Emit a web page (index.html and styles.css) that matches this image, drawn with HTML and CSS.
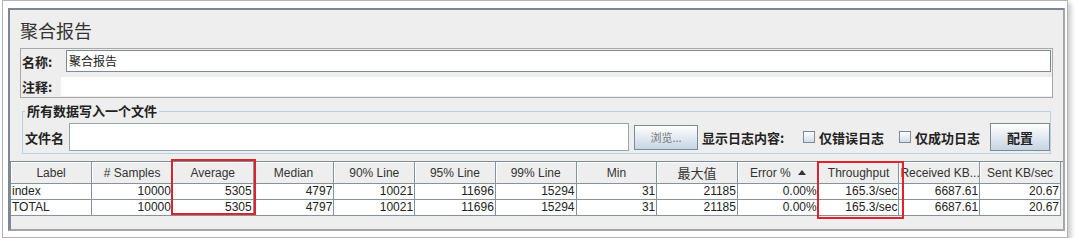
FILE: index.html
```html
<!DOCTYPE html>
<html lang="zh-CN">
<head>
    <meta charset="UTF-8">
    <title>聚合报告</title>
    <link rel="stylesheet" href="styles.css">
</head>
<body>
<div class="frame">
    <div class="panel">
        <div class="title">聚合报告</div>

        <!-- name / comment -->
        <div class="name-box">
            <div class="name-row">
                <span class="label name-label">名称:</span>
                <div class="field name-field">聚合报告</div>
            </div>
            <div class="comment-row">
                <span class="label comment-label">注释:</span>
                <div class="area"></div>
            </div>
        </div>

        <!-- write results to file -->
        <fieldset class="file-set">
            <legend>所有数据写入一个文件</legend>
            <div class="file-row">
                <span class="label file-label">文件名</span>
                <div class="field file-field"></div>
                <button class="btn browse">浏览...</button>
                <span class="label log-label">显示日志内容:</span>
                <label class="check check-first"><span class="box"></span>仅错误日志</label>
                <label class="check check-second"><span class="box"></span>仅成功日志</label>
                <button class="btn config">配置</button>
            </div>
        </fieldset>

        <!-- results table -->
        <div class="table-pane">
            <table>
                <tr>
                    <th>Label</th>
                    <th># Samples</th>
                    <th>Average</th>
                    <th>Median</th>
                    <th>90% Line</th>
                    <th>95% Line</th>
                    <th>99% Line</th>
                    <th>Min</th>
                    <th class="cjk">最大值</th>
                    <th>Error %<svg class="sort" width="8" height="5" viewBox="0 0 8 5"><path d="M0 5 L4 0 L8 5 Z" fill="#333"/></svg></th>
                    <th>Throughput</th>
                    <th>Received KB...</th>
                    <th>Sent KB/sec</th>
                </tr>
                <tr>
                    <td class="text">index</td>
                    <td>10000</td>
                    <td>5305</td>
                    <td>4797</td>
                    <td>10021</td>
                    <td>11696</td>
                    <td>15294</td>
                    <td>31</td>
                    <td>21185</td>
                    <td>0.00%</td>
                    <td>165.3/sec</td>
                    <td>6687.61</td>
                    <td>20.67</td>
                </tr>
                <tr>
                    <td class="text">TOTAL</td>
                    <td>10000</td>
                    <td>5305</td>
                    <td>4797</td>
                    <td>10021</td>
                    <td>11696</td>
                    <td>15294</td>
                    <td>31</td>
                    <td>21185</td>
                    <td>0.00%</td>
                    <td>165.3/sec</td>
                    <td>6687.61</td>
                    <td>20.67</td>
                </tr>
            </table>
            <div class="mark mark-average"></div>
            <div class="mark mark-throughput"></div>
        </div>
    </div>
</div>
</body>
</html>
```

FILE: styles.css
```css
body {
    margin: 0;
    background: #fff;
    font-family: "Liberation Sans", Arial, "Noto Sans CJK SC", sans-serif;
    color: #333;
}
.frame {
    margin-left: 2px;
    width: 1057px;
    border: 1px solid #b4b4b4;
    padding: 7px 2px 6px 5px;
    background: #fff;
    box-shadow: 3px 3px 5px rgba(0,0,0,0.22);
}
.panel {
    width: 1053px;
    height: 219px;
    border: 2px solid;
    border-color: #7b8794 #a6a6a6 #a6a6a6 #7b8794;
    background: #eeeeee;
}
.title {
    height: 24px;
    line-height: 24px;
    margin: 8px 0 0 10px;
    font-family: "Noto Sans CJK SC", sans-serif;
    font-size: 18px;
    color: #333;
}
.label {
    flex-shrink: 0;
    font-family: "Noto Sans CJK SC", sans-serif;
    font-size: 13px;
    font-weight: 700;
    color: #222;
    white-space: nowrap;
}

/* name and comment */
.name-box {
    height: 47px;
    margin: 6px 10px 0 10px;
    padding-top: 1px;
    border: 1px solid #a8a8a8;
    box-sizing: content-box;
}
.name-row {
    display: flex;
    align-items: center;
    height: 22px;
}
.name-label {
    width: 44px;
    padding-left: 1px;
}
.field {
    background: #fff;
    border: 1px solid #7d8b98;
    box-sizing: border-box;
}
.name-field {
    flex: 1;
    height: 22px;
    margin-right: 1px;
    padding-left: 2px;
    font-family: "Noto Sans CJK SC", sans-serif;
    font-size: 12px;
    line-height: 19px;
    color: #222;
}
.comment-row {
    display: flex;
    align-items: center;
    height: 19px;
    margin-top: 5px;
}
.comment-label {
    width: 39px;
    padding-left: 1px;
}
.area {
    flex: 1;
    height: 19px;
    background: #fff;
}

/* file section */
.file-set {
    margin: 6px 12px 0 12px;
    padding: 5px 2px 2px 2px;
    border: 1px solid #b8cfe5;
    min-width: 0;
}
.file-set legend {
    padding: 0 2px;
    font-family: "Noto Sans CJK SC", sans-serif;
    font-size: 13px;
    font-weight: 700;
    line-height: 14px;
    color: #222;
}
.file-row {
    display: flex;
    align-items: center;
    height: 28px;
}
.file-label {
    width: 44px;
}
.file-field {
    flex-shrink: 0;
    width: 560px;
    height: 28px;
    border-color: #9aa5b0;
}
.btn {
    flex-shrink: 0;
    box-sizing: border-box;
    border: 1px solid #7d8b98;
    background: linear-gradient(#ffffff, #c6d4e3);
    padding: 0;
    font-family: "Noto Sans CJK SC", sans-serif;
}
.browse {
    width: 64px;
    height: 25px;
    margin-left: 5px;
    font-size: 11px;
    color: #777;
}
.log-label {
    width: 87px;
    margin-left: 4px;
}
.check {
    flex-shrink: 0;
    display: flex;
    align-items: center;
    white-space: nowrap;
    font-family: "Noto Sans CJK SC", sans-serif;
    font-size: 13px;
    font-weight: 700;
    color: #222;
}
.check .box {
    width: 12px;
    height: 12px;
    margin-right: 4px;
    box-sizing: border-box;
    border: 1px solid #7d8b98;
    background: linear-gradient(#ffffff, #d2dce8);
}
.check-first { margin-left: 14px; }
.check-second { margin-left: 15px; }
.config {
    width: 60px;
    height: 28px;
    margin-left: 10px;
    font-size: 13px;
    font-weight: 700;
    color: #222;
}

/* table */
.table-pane {
    position: relative;
    height: 68px;
    margin-top: 7px;
    border-top: 1px solid #7d8b98;
    border-left: 1px solid #7d8b98;
}
table {
    width: 1050px;
    table-layout: fixed;
    border-collapse: collapse;
    font-size: 12px;
}
th, td {
    padding: 0 1px;
    border-right: 1px solid #8592a0;
    border-bottom: 1px solid #8592a0;
    white-space: nowrap;
    overflow: hidden;
}
th {
    height: 21px;
    background: #eeeeee;
    font-weight: 400;
    text-align: center;
    color: #333;
    box-shadow: inset 1px 1px 0 #fff;
}
th.cjk {
    font-family: "Noto Sans CJK SC", sans-serif;
    font-size: 13px;
}
.sort {
    margin-left: 7px;
    vertical-align: 2px;
}
td {
    height: 15px;
    line-height: 15px;
    background: #fff;
    text-align: right;
    color: #222;
}
td.text {
    text-align: left;
}
.mark {
    position: absolute;
    box-sizing: border-box;
    border: 2px solid #e0232b;
}
.mark-average {
    left: 160px;
    top: -3px;
    width: 85px;
    height: 56px;
}
.mark-throughput {
    left: 806px;
    top: -1px;
    width: 87px;
    height: 58px;
}
```
